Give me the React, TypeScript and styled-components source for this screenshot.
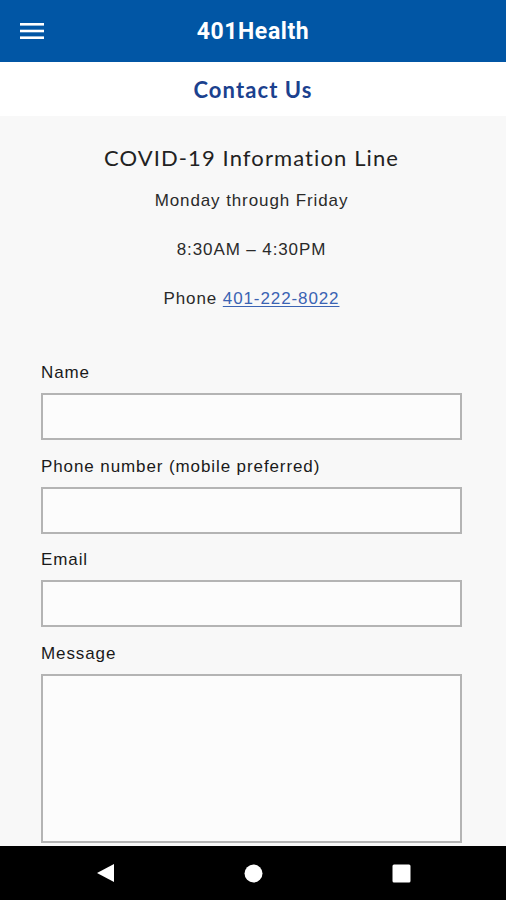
import React from 'react';
import styled, { createGlobalStyle } from 'styled-components';

const GlobalStyle = createGlobalStyle`
  html, body {
    margin: 0;
    padding: 0;
    background: #f8f8f8;
  }
  * { box-sizing: border-box; }
`;

const Screen = styled.div`
  display: flex;
  flex-direction: column;
  height: 900px;
  width: 506px;
  overflow: hidden;
  background: #f8f8f8;
`;

const AppBar = styled.header`
  height: 62px;
  flex: 0 0 62px;
  display: grid;
  grid-template-columns: 64px 1fr 64px;
  align-items: center;
  background: #0156a5;
`;

const MenuButton = styled.button`
  width: 64px;
  height: 62px;
  border: none;
  background: transparent;
  display: flex;
  align-items: center;
  padding: 0 0 0 20px;
`;

const AppTitle = styled.h1`
  margin: 0;
  text-align: center;
  color: #fff;
  font-family: Roboto, "Liberation Sans", sans-serif;
  font-weight: 700;
  font-size: 23px;
  letter-spacing: 0.6px;
`;

const SubBar = styled.div`
  height: 54px;
  flex: 0 0 54px;
  display: flex;
  align-items: center;
  justify-content: center;
  background: #fff;
`;

const SubTitle = styled.h2`
  margin: 0;
  color: #1b418e;
  font-family: Lato, "Noto Sans", sans-serif;
  font-weight: 700;
  font-size: 22px;
  letter-spacing: 1.1px;
`;

const Content = styled.main`
  flex: 1;
  overflow: hidden;
  padding: 29px 44px 0 41px;
`;

const InfoBlock = styled.section`
  display: flex;
  flex-direction: column;
  align-items: center;
  color: #222;
`;

const InfoTitle = styled.div`
  font-family: Lato, "Noto Sans", sans-serif;
  font-size: 22px;
  line-height: 26px;
  letter-spacing: 1.1px;
  margin-bottom: 20px;
`;

const InfoLine = styled.div`
  font-family: "Liberation Sans", Arial, sans-serif;
  font-size: 17px;
  line-height: 20px;
  letter-spacing: 0.9px;
  color: #2a2a2a;
  & + & { margin-top: 29px; }
`;

const PhoneLink = styled.a`
  color: #3b63b3;
  text-decoration: underline;
  text-underline-offset: 2px;
`;

const Form = styled.form`
  margin-top: 54px;
  display: flex;
  flex-direction: column;
`;

const Field = styled.div`
  display: flex;
  flex-direction: column;
  gap: 10px;
  & + & { margin-top: 16.5px; }
`;

const Label = styled.label`
  font-family: "Liberation Sans", Arial, sans-serif;
  font-size: 17px;
  line-height: 20px;
  letter-spacing: 0.9px;
  color: #1a1a1a;
`;

const TextInput = styled.input`
  width: 100%;
  height: 47px;
  border: 2px solid #b4b4b4;
  background: #fcfcfc;
  outline: none;
  font-size: 16px;
  padding: 0 8px;
`;

const MessageInput = styled.textarea`
  width: 100%;
  height: 169px;
  border: 2px solid #b4b4b4;
  background: #fcfcfc;
  outline: none;
  resize: none;
  font-size: 16px;
  padding: 8px;
`;

const NavBar = styled.nav`
  height: 54px;
  flex: 0 0 54px;
  background: #000;
  display: flex;
  align-items: center;
  justify-content: center;
  gap: 129px;
`;

const NavIcon = styled.svg`
  display: block;
  flex: 0 0 auto;
`;

function Hamburger() {
  return (
    <svg width="24" height="18" viewBox="0 0 24 18">
      <rect x="0" y="1" width="24" height="2.6" fill="#fff" />
      <rect x="0" y="7.7" width="24" height="2.6" fill="#fff" />
      <rect x="0" y="14.4" width="24" height="2.6" fill="#fff" />
    </svg>
  );
}

export default function App() {
  return (
    <>
      <GlobalStyle />
      <Screen>
        <AppBar>
          <MenuButton type="button" aria-label="Menu">
            <Hamburger />
          </MenuButton>
          <AppTitle>401Health</AppTitle>
          <div />
        </AppBar>
        <SubBar>
          <SubTitle>Contact Us</SubTitle>
        </SubBar>
        <Content>
          <InfoBlock>
            <InfoTitle>COVID-19 Information Line</InfoTitle>
            <InfoLine>Monday through Friday</InfoLine>
            <InfoLine>8:30AM – 4:30PM</InfoLine>
            <InfoLine>
              Phone <PhoneLink href="#">401-222-8022</PhoneLink>
            </InfoLine>
          </InfoBlock>
          <Form>
            <Field>
              <Label>Name</Label>
              <TextInput type="text" />
            </Field>
            <Field>
              <Label>Phone number (mobile preferred)</Label>
              <TextInput type="tel" />
            </Field>
            <Field>
              <Label>Email</Label>
              <TextInput type="email" />
            </Field>
            <Field>
              <Label>Message</Label>
              <MessageInput />
            </Field>
          </Form>
        </Content>
        <NavBar>
          <NavIcon width="19" height="20" viewBox="0 0 19 20">
            <polygon points="18,1 18,19 1,10" fill="#fff" />
          </NavIcon>
          <NavIcon width="19" height="19" viewBox="0 0 19 19">
            <circle cx="9.5" cy="9.5" r="9" fill="#fff" />
          </NavIcon>
          <NavIcon width="19" height="19" viewBox="0 0 19 19">
            <rect x="0.5" y="0.5" width="18" height="18" rx="1.5" fill="#fff" />
          </NavIcon>
        </NavBar>
      </Screen>
    </>
  );
}
